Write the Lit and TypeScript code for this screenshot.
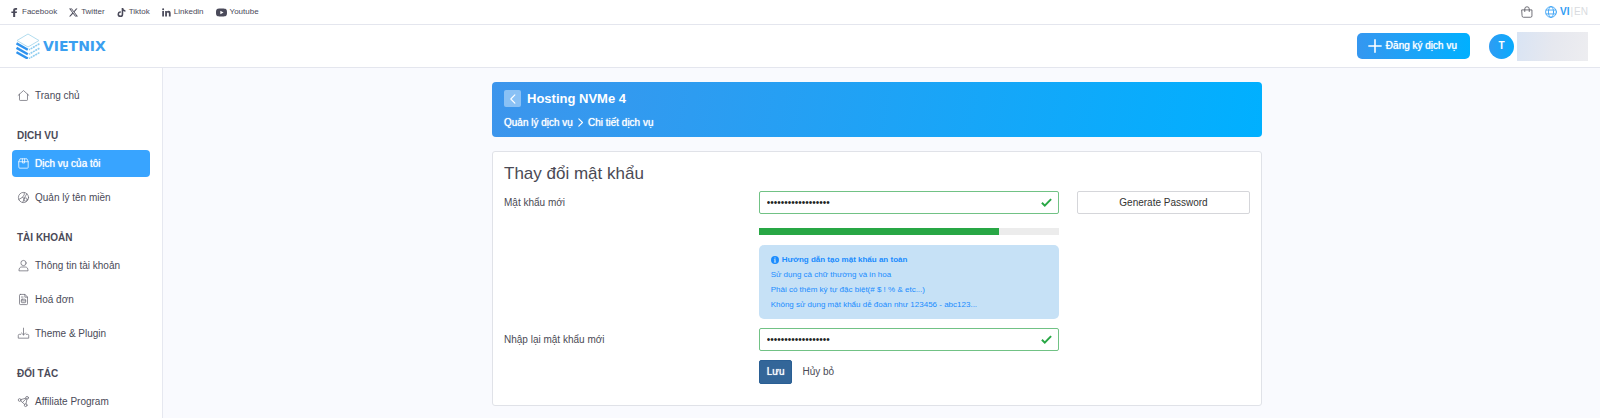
import { LitElement, html, css, svg, nothing, type TemplateResult } from "lit";
import { customElement, property, state } from "lit/decorators.js";
import { classMap } from "lit/directives/class-map.js";

const shapes: Record<string, TemplateResult> = {
  home: svg`<path d="M.2 7.800 8 .8l7.800 7M2.200 6.200V14.200q0 1 1 1h9.600q1 0 1-1V6.200"/>`,
  box: svg`<path d="M1.200 5 3 1.200h10L14.800 5v8.600a1.200 1.200 0 0 1-1.200 1.200H2.400a1.200 1.200 0 0 1-1.200-1.200zM1.200 5.400h13.600M6.400 1.200v6h3.200v-6"/>`,
  domain: svg`<circle cx="8" cy="8" r="7.400"/><path d="M1 11 6.400 7.800 9 9.200 12.800 2.600M9 1v3.200L6.400 7.800M9 9.200 7 15.200"/><circle cx="11.200" cy="11" r="2.400"/>`,
  user: svg`<circle cx="8" cy="4.400" r="3.800"/><path d="M1.400 15.200c0-3.400 1.600-5 4-5h5.200c2.400 0 4 1.600 4 5z"/>`,
  bill: svg`<path d="M3.400.6h6.800l3.600 3.800v9.800q0 1.200-1.200 1.200H3.400q-1.200 0-1.200-1.200V1.800Q2.200.6 3.400.6zM10 .6v4h3.800M5 4.400h2.400M6 7.600h4q1.200 0 1.200 1.200v2.600q0 1.200-1.200 1.200H6q-1.200 0-1.200-1.200V8.800Q4.800 7.600 6 7.600zM5 10h6"/>`,
  download: svg`<path d="M8 .2v9.800M5 7.200l3 3 3-3M4 9.200H2c-1 0-1.600.6-1.600 1.600v4h15.200v-4c0-1-.6-1.600-1.600-1.600H12"/>`,
  share: svg`<circle cx="2.400" cy="5.800" r="2"/><circle cx="13.200" cy="2.600" r="2"/><circle cx="11.200" cy="13.400" r="2"/><path d="M4.400 5.200l6.800-2M13 4.600l-1.400 6.800M4 7.200l2.600 2.200M11.600 4.200 6.600 9.400l3 2.800"/>`,
  bag: svg`<path d="M1.400 5.200h13.200v8a1.800 1.800 0 0 1-1.800 1.800H3.200a1.800 1.800 0 0 1-1.800-1.800zM5 7.400V4a3 3 0 0 1 6 0v3.400"/>`,
  globe: svg`<circle cx="8" cy="8" r="7.200"/><ellipse cx="8" cy="8" rx="3.400" ry="7.200"/><path d="M1.600 5.400h12.800M1.600 10.600h12.800"/>`,
  left: svg`<path d="M11 1.500 4.500 8l6.500 6.500" stroke-width="1.800"/>`,
  right: svg`<path d="M5 1.500 11.500 8 5 14.500" stroke-width="2"/>`,
  plus: svg`<path d="M8 1v14M1 8h14" stroke-width="1.800"/>`,
};

const solids: Record<string, TemplateResult> = {
  facebook: svg`<path d="M5.600 16V9H2.400V6h3.200V3.900C5.600 1.300 7.400 0 10 0c1.400 0 2.600.1 2.600.1v2.800h-1.600C9.500 2.900 9.200 3.500 9.200 4.300V6h3.400l-.6 3H9.200v7z"/>`,
  twitter: svg`<path d="M12.600 1h2.500L9.700 7.200 16 15h-5L7.100 10.200 2.600 15H.1l5.800-6.600L0 1h5.100l3.500 4.700zm-.9 12.600h1.400L4.400 2.400H2.900z"/>`,
  tiktok: svg`<path d="M15 6.600a6.600 6.600 0 0 1-3.900-1.300v5.600A5.100 5.100 0 1 1 6.700 5.900v2.900a2.300 2.300 0 1 0 1.600 2.200V0h2.800A3.900 3.900 0 0 0 15 3.800z"/>`,
  linkedin: svg`<path d="M.4 5.300h3.100V15H.4zM2 .6a1.800 1.800 0 1 1 0 3.600A1.800 1.800 0 0 1 2 .6zM5.600 5.300h3v1.300c.5-.8 1.500-1.600 3-1.600 3.200 0 3.800 2 3.800 4.700V15h-3.200v-4.700c0-1.100 0-2.500-1.600-2.500s-1.800 1.200-1.800 2.400V15H5.600z"/>`,
  youtube: svg`<path fill-rule="evenodd" d="M2.400 2.500C5 2 11 2 13.600 2.500 15.500 3 16 5 16 8s-.5 5-2.400 5.500C11 14 5 14 2.400 13.500.5 13 0 11 0 8s.5-5 2.400-5.500zM6.300 5.300v5.400L11 8z"/>`,
  info: svg`<path fill-rule="evenodd" d="M8 0a8 8 0 1 1 0 16A8 8 0 0 1 8 0zM6.800 2.800v2.400h2.400V2.800zM5.800 6.500v1.600h1v3.200h-1v1.600h4.400v-1.600h-1V6.500z"/>`,
  check: svg`<path d="m.3 9.400 2-2 3.200 3.200L13.700 2l2 2L5.500 14.600z"/>`,
};

@customElement("vx-icon")
class VxIcon extends LitElement {
  @property() name = "";

  static styles = css`
    :host { display: block; flex: none; width: 11px; height: 11px; }
    .glyph { display: block; width: 100%; height: 100%; overflow: visible; }
    .line { fill: none; stroke: currentColor; stroke-width: 1.1; stroke-linejoin: round; stroke-linecap: round; }
    .solid { fill: currentColor; }
  `;

  render() {
    const outline = this.name in shapes;
    return html`<svg class="glyph ${outline ? "line" : "solid"}" viewBox="0 0 16 16" aria-hidden="true">
      ${outline ? shapes[this.name] : solids[this.name] ?? nothing}
    </svg>`;
  }
}

const base = css`
  *, *::before, *::after { box-sizing: border-box; }
  a { color: inherit; text-decoration: none; }
  button, input { font: inherit; color: inherit; margin: 0; }
  button { cursor: pointer; }
`;

const socials = [
  ["facebook", "Facebook"],
  ["twitter", "Twitter"],
  ["tiktok", "Tiktok"],
  ["linkedin", "Linkedin"],
  ["youtube", "Youtube"],
];

@customElement("vx-header")
class VxHeader extends LitElement {
  static styles = [base, css`
    :host { display: block; background: #fff; color: #4a4a5a; }
    .top { display: flex; justify-content: space-between; align-items: center; height: 25px; padding: 0 12px 0 10px; border-bottom: 1px solid #e4e6ee; font-size: 8px; }
    .socials, .tools, .lang, .social, .account { display: flex; align-items: center; }
    .socials { gap: 12px; }
    .social { gap: 3px; }
    .social vx-icon { width: 9px; height: 9px; }
    .social .youtube { width: 11px; height: 11px; }
    .tools { gap: 12px; }
    .bag { display: block; padding: 0; border: 0; background: none; color: #55555f; }
    .bag vx-icon, .lang vx-icon { width: 12px; height: 12px; }
    .lang { gap: 3px; font-size: 10px; color: #d9dbe0; }
    .lang vx-icon, .on { color: #2f9df4; }
    .on { font-weight: 700; }
    .pair { display: flex; gap: 1px; }
    .bar { display: flex; justify-content: space-between; align-items: center; height: 43px; padding: 0 12px 0 16px; border-bottom: 1px solid #e4e6ee; }
    .logo { display: flex; align-items: center; gap: 3px; font-family: "DejaVu Sans", sans-serif; font-weight: 700; font-size: 14px; color: #3a9ff0; }
    .mark { display: block; width: 24px; height: 26px; }
    .account { gap: 19px; }
    .order { display: flex; align-items: center; gap: 4px; height: 26px; padding: 0 13px 0 11px; border: 0; border-radius: 5px; background: linear-gradient(90deg, #3597f0, #00b0ff); color: #fff; font-size: 10px; text-shadow: 0 0 1px #fff; }
    .order vx-icon { width: 14px; height: 14px; }
    .me { display: flex; align-items: center; gap: 3px; }
    .avatar { display: grid; place-items: center; width: 25px; height: 25px; border-radius: 50%; background: linear-gradient(90deg, #2f9cf3, #08abfd); color: #fff; font-size: 10px; font-weight: 700; }
    .name { width: 71px; height: 29px; background: linear-gradient(100deg, #d9e4f4, #e6e8ef 50%, #ededf0); }
  `];

  render() {
    return html`
      <div class="top">
        <nav class="socials" aria-label="Social">
          ${socials.map(([icon, label]) => html`<a class="social" href="#"><vx-icon class=${icon} name=${icon}></vx-icon>${label}</a>`)}
        </nav>
        <div class="tools">
          <button class="bag" type="button" aria-label="Giỏ hàng"><vx-icon name="bag"></vx-icon></button>
          <div class="lang">
            <vx-icon name="globe"></vx-icon>
            <div class="pair"><a class="on" href="#">VI</a><span>|</span><a href="#">EN</a></div>
          </div>
        </div>
      </div>
      <div class="bar">
        <a class="logo" href="#">
          <svg class="mark" viewBox="0 0 24 26" fill="none" aria-hidden="true">
            <path d="M1 7.500 12 1l11 6.500L12 14z" stroke="#a9d8ec" stroke-width=".9"/>
            <path d="M.5 10.400 11.800 16.800M.5 14.800l11.300 6.400M.5 19.200l11.300 6.400" stroke="#2f93ee" stroke-width="2.400"/>
            <path d="M23.400 10.800 13 16.800M23.400 15.200 13 21.200M23.400 19.600 13 25.600" stroke="#8fcdf0" stroke-width="1.600" stroke-dasharray="2 .7"/>
          </svg>
          VIETNIX
        </a>
        <div class="account">
          <button class="order" type="button"><vx-icon name="plus"></vx-icon>Đăng ký dịch vụ</button>
          <div class="me"><span class="avatar">T</span><span class="name"></span></div>
        </div>
      </div>`;
  }
}

interface Group {
  title?: string;
  items: { icon: string; label: string }[];
}

const groups: Group[] = [
  { items: [{ icon: "home", label: "Trang chủ" }] },
  { title: "DỊCH VỤ", items: [{ icon: "box", label: "Dịch vụ của tôi" }, { icon: "domain", label: "Quản lý tên miền" }] },
  { title: "TÀI KHOẢN", items: [{ icon: "user", label: "Thông tin tài khoản" }, { icon: "bill", label: "Hoá đơn" }, { icon: "download", label: "Theme & Plugin" }] },
  { title: "ĐỐI TÁC", items: [{ icon: "share", label: "Affiliate Program" }] },
];

@customElement("vx-sidebar")
class VxSidebar extends LitElement {
  @state() private current = "Dịch vụ của tôi";

  static styles = [base, css`
    :host { display: block; background: #fff; border-right: 1px solid #e6e8f0; color: #4a4a58; font-size: 10px; }
    .nav, .group { display: flex; flex-direction: column; gap: 7px; }
    .nav { padding: 14px 12px; }
    .title { display: flex; align-items: center; height: 27px; margin: 0; padding: 12px 5px 0; font-size: 10px; font-weight: 700; }
    .item { display: flex; align-items: center; gap: 6px; height: 27px; padding: 0 6px; border-radius: 4px; white-space: nowrap; }
    .item vx-icon { color: #6b6b76; }
    .active { background: #38a4ff; color: #fff; text-shadow: 0 0 1px #fff; }
    .active vx-icon { color: #fff; }
  `];

  render() {
    return html`<nav class="nav">
      ${groups.map((g) => html`<div class="group">
        ${g.title ? html`<h2 class="title">${g.title}</h2>` : nothing}
        ${g.items.map((i) => html`<a href="#" class=${classMap({ item: true, active: i.label === this.current })}
          @click=${() => (this.current = i.label)}><vx-icon name=${i.icon}></vx-icon>${i.label}</a>`)}
      </div>`)}
    </nav>`;
  }
}

const tips = [
  "Sử dụng cả chữ thường và in hoa",
  "Phải có thêm ký tự đặc biệt(# $ ! % & etc...)",
  "Không sử dụng mật khẩu dễ đoán như 123456 - abc123...",
];

@customElement("vx-password-form")
class VxPasswordForm extends LitElement {
  @state() private strength = 80;

  static styles = [base, css`
    :host { display: block; font-size: 10px; color: #4a4a54; }
    .card { padding: 12px 11px 21px; border: 1px solid #e0e2e8; border-radius: 3px; background: #fff; }
    .heading { margin: 0 0 7px; font-size: 17px; font-weight: 400; line-height: 20px; }
    .form { display: grid; gap: 9px; }
    .row { display: grid; grid-template-columns: repeat(12, minmax(0, 1fr)); column-gap: 18px; align-items: start; }
    .label { grid-column: span 4; line-height: 23px; }
    .stack { grid-column: span 5; }
    .field { position: relative; }
    .input { display: block; width: 100%; height: 23px; padding: 0 24px 0 7px; border: 1px solid #71c285; border-radius: 2px; background: #fff; color: #222; outline: 0; }
    .tick { position: absolute; top: 6px; right: 7px; color: #28a745; }
    .generate { grid-column: span 3; height: 23px; border: 1px solid #d5d6da; border-radius: 2px; background: #fff; color: #333; }
    .meter { height: 7px; margin: 14px 0 10px; background: #ececec; }
    .fill { height: 100%; background: #28a745; }
    .tips { padding: 7px 12px; border-radius: 5px; background: #c6e1f6; color: #1a8cff; font-size: 8px; line-height: 15px; }
    .lead { display: flex; align-items: center; gap: 3px; margin: 0; font-weight: 700; }
    .lead vx-icon { width: 8px; height: 8px; }
    .tip { margin: 0; }
    .actions { grid-column: 5 / span 5; display: flex; align-items: center; gap: 10px; }
    .save { height: 24px; padding: 0 7px; border: 1px solid #2a5f94; border-radius: 2px; background: #336699; color: #fff; text-shadow: 0 0 1px #fff; }
  `];

  private field(id: string) {
    return html`<div class="field">
      <input class="input" id=${id} type="password" value="Vx#2024!hostNVMe4s" autocomplete="new-password" />
      <vx-icon class="tick" name="check"></vx-icon>
    </div>`;
  }

  render() {
    return html`<section class="card">
      <h2 class="heading">Thay đổi mật khẩu</h2>
      <form class="form" @submit=${(e: Event) => e.preventDefault()}>
        <div class="row">
          <label class="label" for="new">Mật khẩu mới</label>
          <div class="stack">
            ${this.field("new")}
            <div class="meter"><div class="fill" style="width:${this.strength}%"></div></div>
            <div class="tips">
              <p class="lead"><vx-icon name="info"></vx-icon>Hướng dẫn tạo mật khẩu an toàn</p>
              ${tips.map((t) => html`<p class="tip">${t}</p>`)}
            </div>
          </div>
          <button class="generate" type="button">Generate Password</button>
        </div>
        <div class="row">
          <label class="label" for="confirm">Nhập lại mật khẩu mới</label>
          <div class="stack">${this.field("confirm")}</div>
        </div>
        <div class="row">
          <div class="actions">
            <button class="save" type="submit">Lưu</button>
            <a href="#">Hủy bỏ</a>
          </div>
        </div>
      </form>
    </section>`;
  }
}

@customElement("app-root")
class AppRoot extends LitElement {
  static styles = [base, css`
    :host { display: flex; flex-direction: column; min-height: 100vh; background: #f9fafe; font-family: "Liberation Sans", Arial, sans-serif; font-size: 10px; line-height: 1.2; }
    .body { flex: 1; display: grid; grid-template-columns: 163px minmax(0, 1fr); }
    .main { padding: 14px 21px 12px 12px; }
    .wrap { display: grid; gap: 14px; max-width: 770px; margin: 0 auto; }
    .banner { display: grid; gap: 9px; padding: 8px 12px; border-radius: 4px; background: linear-gradient(100deg, #3d95ec, #00b0ff); color: #fff; }
    .line, .crumbs { display: flex; align-items: center; gap: 6px; }
    .back { display: grid; place-items: center; width: 17px; height: 17px; padding: 0; border: 0; border-radius: 2px; background: #8ac1f5; }
    .back vx-icon { width: 10px; height: 10px; }
    .title { margin: 0; font-size: 13px; font-weight: 700; }
    .crumbs { gap: 3px; line-height: 13px; text-shadow: 0 0 1px #fff; }
    .crumbs vx-icon { width: 9px; height: 9px; }
  `];

  render() {
    return html`
      <vx-header></vx-header>
      <div class="body">
        <vx-sidebar></vx-sidebar>
        <main class="main">
          <div class="wrap">
            <header class="banner">
              <div class="line">
                <button class="back" type="button" aria-label="Quay lại"><vx-icon name="left"></vx-icon></button>
                <h1 class="title">Hosting NVMe 4</h1>
              </div>
              <nav class="crumbs"><a href="#">Quản lý dịch vụ</a><vx-icon name="right"></vx-icon><a href="#">Chi tiết dịch vụ</a></nav>
            </header>
            <vx-password-form></vx-password-form>
          </div>
        </main>
      </div>`;
  }
}
